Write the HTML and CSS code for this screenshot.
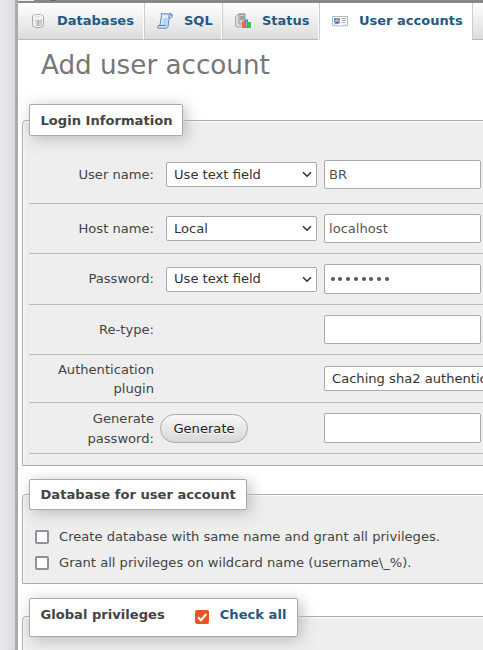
FILE: index.html
```html
<!DOCTYPE html>
<html lang="en">
<head>
<meta charset="utf-8">
<title>Add user account</title>
<link rel="stylesheet" href="styles.css">
</head>
<body>
<div class="app">
  <aside class="navigation"></aside>
  <div class="resizer"></div>
  <main class="page">
    <div class="serverbar"><span class="corner"></span><span class="mark"></span></div>
    <nav class="tabs">
      <a class="tab databases">
        <svg class="icon" viewBox="0 0 16 16"><defs><linearGradient id="cyl"><stop offset="0" stop-color="#eee"/><stop offset=".4" stop-color="#ccc"/><stop offset=".55" stop-color="#aaa"/><stop offset=".7" stop-color="#ddd"/><stop offset="1" stop-color="#bbb"/></linearGradient></defs><path d="M2.500 4C2.500.7 13.500.7 13.500 4v8c0 3.500-11 3.500-11 0z" fill="#f3f3f3" stroke="#aaa"/><path d="M4 6c2 1 6 1 8 0v6c-2 1.600-6 1.600-8 0z" fill="url(#cyl)"/><ellipse cx="8" cy="4" rx="4.500" ry="1.700" fill="#e8e8e8" stroke="#fff" stroke-width=".7"/></svg>
        <span>Databases</span>
      </a>
      <a class="tab sql">
        <svg class="icon" viewBox="0 0 16 16"><path d="M4 .8h10.500c1.300 1.200.8 3.600-.7 4.200h-1.600L11 13.500c-.2 1.200-1 1.700-2 1.700H1c-.9-1.300-.2-2.700 1-3h1L4.500 2.500z" fill="#c9e1fa" stroke="#5a8cc8"/><path d="M5.500 2.500h6L9.800 12H4z" fill="#eaf4ff"/><path d="M6 5h5l-1 7H5z" fill="#b4d6fa"/><path d="M1 12.500h8M12 5V2.500C12 1 14.500 1 14.500 3" fill="none" stroke="#5688c4"/></svg>
        <span>SQL</span>
      </a>
      <a class="tab status">
        <svg class="icon" viewBox="0 0 16 16"><path d="M.5 3.500L3.500.8H10v10l-3 3H1.500l-1-1z" fill="#dcdcdc" stroke="#a5a5a5"/><path d="M4 1.500h5.500v9.500H4z" fill="#d0d0d0" stroke="#999"/><path d="M5 4h4M5 6h4" stroke="#777"/><path d="M7 8h3v7H7z" fill="#f8664e"/><path d="M10 6.500h3V15h-3z" fill="#3c83f3"/><path d="M11 8h1v6h-1z" fill="#8fc1ff"/><path d="M13 9h3v6h-3z" fill="#42c236"/></svg>
        <span>Status</span>
      </a>
      <a class="tab users active">
        <svg class="icon" viewBox="0 0 16 16"><path d="M.5 3.500h15v9.500h-2v-1h-2v1h-7v-1h-2v1h-2z" fill="#fff" stroke="#bbb"/><path d="M2 5h6v5.500H2z" fill="#65a6e8"/><circle cx="5" cy="7.200" r="1.800" fill="#efac70"/><path d="M3 7V5.500h4V7L5 6z" fill="#a8683c"/><path d="M3 10.500c.5-2 3.500-2 4 0" fill="#1e67b8"/><path d="M9.500 5.500H14M9.500 7.500H14M9.500 9.500H13" stroke="#a3b6ca"/></svg>
        <span>User accounts</span>
      </a>
      <a class="tab rest"></a>
    </nav>
    <h2 class="title">Add user account</h2>

    <section class="fieldset login">
      <div class="legend">Login Information</div>
      <div class="item r1"><label>User name:</label><div class="select">Use text field<svg class="chevron" viewBox="0 0 10 7"><path d="M1 1.200l4 4 4-4"/></svg></div><div class="input">BR</div></div>
      <div class="item r2"><label>Host name:</label><div class="select">Local<svg class="chevron" viewBox="0 0 10 7"><path d="M1 1.200l4 4 4-4"/></svg></div><div class="input">localhost</div></div>
      <div class="item r3"><label>Password:</label><div class="select">Use text field<svg class="chevron" viewBox="0 0 10 7"><path d="M1 1.200l4 4 4-4"/></svg></div><div class="input tall secret"><i></i><i></i><i></i><i></i><i></i><i></i><i></i><i></i></div></div>
      <div class="item r4"><label>Re-type:</label><div class="input"></div></div>
      <div class="item r5"><label>Authentication plugin</label><div class="select plugin">Caching sha2 authentication</div></div>
      <div class="item r6"><label>Generate password:</label><div class="button">Generate</div><div class="input tall"></div></div>
    </section>

    <section class="fieldset database">
      <div class="legend">Database for user account</div>
      <div class="option"><span class="check"></span>Create database with same name and grant all privileges.</div>
      <div class="option"><span class="check"></span>Grant all privileges on wildcard name (username\_%).</div>
    </section>

    <section class="fieldset global">
      <div class="legend">Global privileges <span class="check checked"><svg viewBox="0 0 14 14"><path d="M3 7.200l3 3L11.200 4"/></svg></span><a>Check all</a></div>
    </section>
  </main>
</div>
</body>
</html>
```
FILE: styles.css
```css
* { box-sizing: border-box; }
body {
  margin: 0;
  height: 650px;
  overflow: hidden;
  background: #fff;
  color: #444;
  font: 13.1px/20px "DejaVu Sans", sans-serif;
}
.app { display: flex; height: 650px; }
.navigation { flex: 0 0 15px; background: linear-gradient(90deg, #e5e7e9, #e2e4e6 50%, #d5d8da); }
.resizer { flex: 0 0 3px; background: #aaa; }
.page { flex: 0 0 465px; height: 650px; overflow: hidden; }

.serverbar { display: flex; height: 3px; background: #888; }
.corner { width: 16px; height: 1px; background: #eee; }
.mark { width: 6px; height: 1px; margin-left: 16px; background: #666; }

.tabs { display: flex; height: 37px; }
.tab {
  display: flex;
  flex: none;
  align-items: center;
  height: 37px;
  padding: 0 0 1px 12px;
  border-left: 1px solid #ccc;
  border-right: 1px solid #fff;
  border-bottom: 1px solid #bbb;
  background: linear-gradient(#fff, #dcdcdc);
  color: #235a81;
  font-size: 13px;
  font-weight: bold;
  white-space: nowrap;
}
.databases { width: 126px; border-left: 0; }
.sql { width: 78px; }
.status { width: 97px; }
.users { width: 153px; }
.rest { width: 12px; }
.active { background: #fff; border-bottom-color: #fff; }
.icon { flex: none; width: 16px; height: 16px; margin-right: 11px; }

.title {
  height: 80px;
  margin: 0;
  padding: 6px 0 0 23px;
  color: #777;
  font-size: 26.2px;
  font-weight: normal;
  line-height: 38px;
}

.fieldset {
  width: 470px;
  margin-left: 4px;
  padding-left: 6px;
  border: 1px solid #aaa;
  border-radius: 4px 0 0 0;
  background: #eee;
  box-shadow: inset 1px 1px 2px #fff;
}
.login { height: 346px; }
.database { height: 90px; margin-top: 28px; }
.global { height: 60px; margin-top: 32px; }
.legend {
  display: flex;
  align-items: center;
  width: 154px;
  height: 32px;
  margin-top: -17px;
  padding: 1px 0 0 10.500px;
  border: 1px solid #aaa;
  border-radius: 2px;
  background: #fff;
  box-shadow: 3px 3px 15px #bbb;
  font-weight: bold;
  white-space: nowrap;
}
.database .legend { width: 218px; height: 31px; margin-top: -16px; margin-bottom: 14px; padding-top: 0; }
.global .legend { width: 269px; height: 39px; margin-top: -19px; padding-top: 0; padding-bottom: 5px; }
.legend a { color: #235a81; }

.item {
  display: flex;
  align-items: center;
  height: 50px;
  border-bottom: 1px solid #bbb;
}
.r1 { height: 59px; margin-top: 9px; }
.r3, .r6 { height: 51px; }
.r5 { height: 48px; }
.item label { flex: none; width: 125px; padding-left: 20px; text-align: right; }
.r1 label, .r6 label { padding-top: 1px; }
.r5 label { line-height: 19px; }
.select {
  display: flex;
  flex: none;
  align-items: center;
  width: 151px;
  height: 25px;
  margin-left: 12px;
  padding: 0 4px 0 7px;
  border: 1px solid #aaa;
  border-radius: 2px;
  background: #fff;
  color: #333;
  white-space: nowrap;
}
.r1 .select, .r1 .input { padding-top: 1px; }
.chevron { width: 10px; height: 7px; margin-left: auto; fill: none; stroke: #333; stroke-width: 1.6; }
.input {
  display: flex;
  flex: none;
  align-items: center;
  width: 157px;
  height: 29px;
  margin-left: 7px;
  padding-left: 4px;
  border: 1px solid #aaa;
  border-radius: 2px;
  background: #fff;
  color: #555;
}
.tall { height: 30px; }
.secret { gap: 3.8px; padding: 0 0 1px 5.500px; }
.secret i { width: 4px; height: 4px; border-radius: 50%; background: #555; }
.r4 .input { margin-left: 170px; }
.plugin { width: 220px; margin-left: 170px; }
.button {
  flex: none;
  width: 88px;
  height: 29px;
  margin: 0 69px 0 6px;
  border: 1px solid #aaa;
  border-radius: 15px;
  background: linear-gradient(#f8f8f8, #d8d8d8);
  color: #222;
  line-height: 27px;
  text-align: center;
  text-shadow: 0 1px 0 #fff;
}

.option { display: flex; align-items: center; height: 26px; white-space: nowrap; }
.check {
  flex: none;
  width: 14px;
  height: 14px;
  margin: 0 10px 0 6px;
  border: 2px solid #8f8f9d;
  border-radius: 2px;
  background: #fff;
}
.checked { margin: 4px 11px 0 30px; border: 0; background: #e95420; }
.checked svg { display: block; fill: none; stroke: #fff; stroke-width: 2; }
```
